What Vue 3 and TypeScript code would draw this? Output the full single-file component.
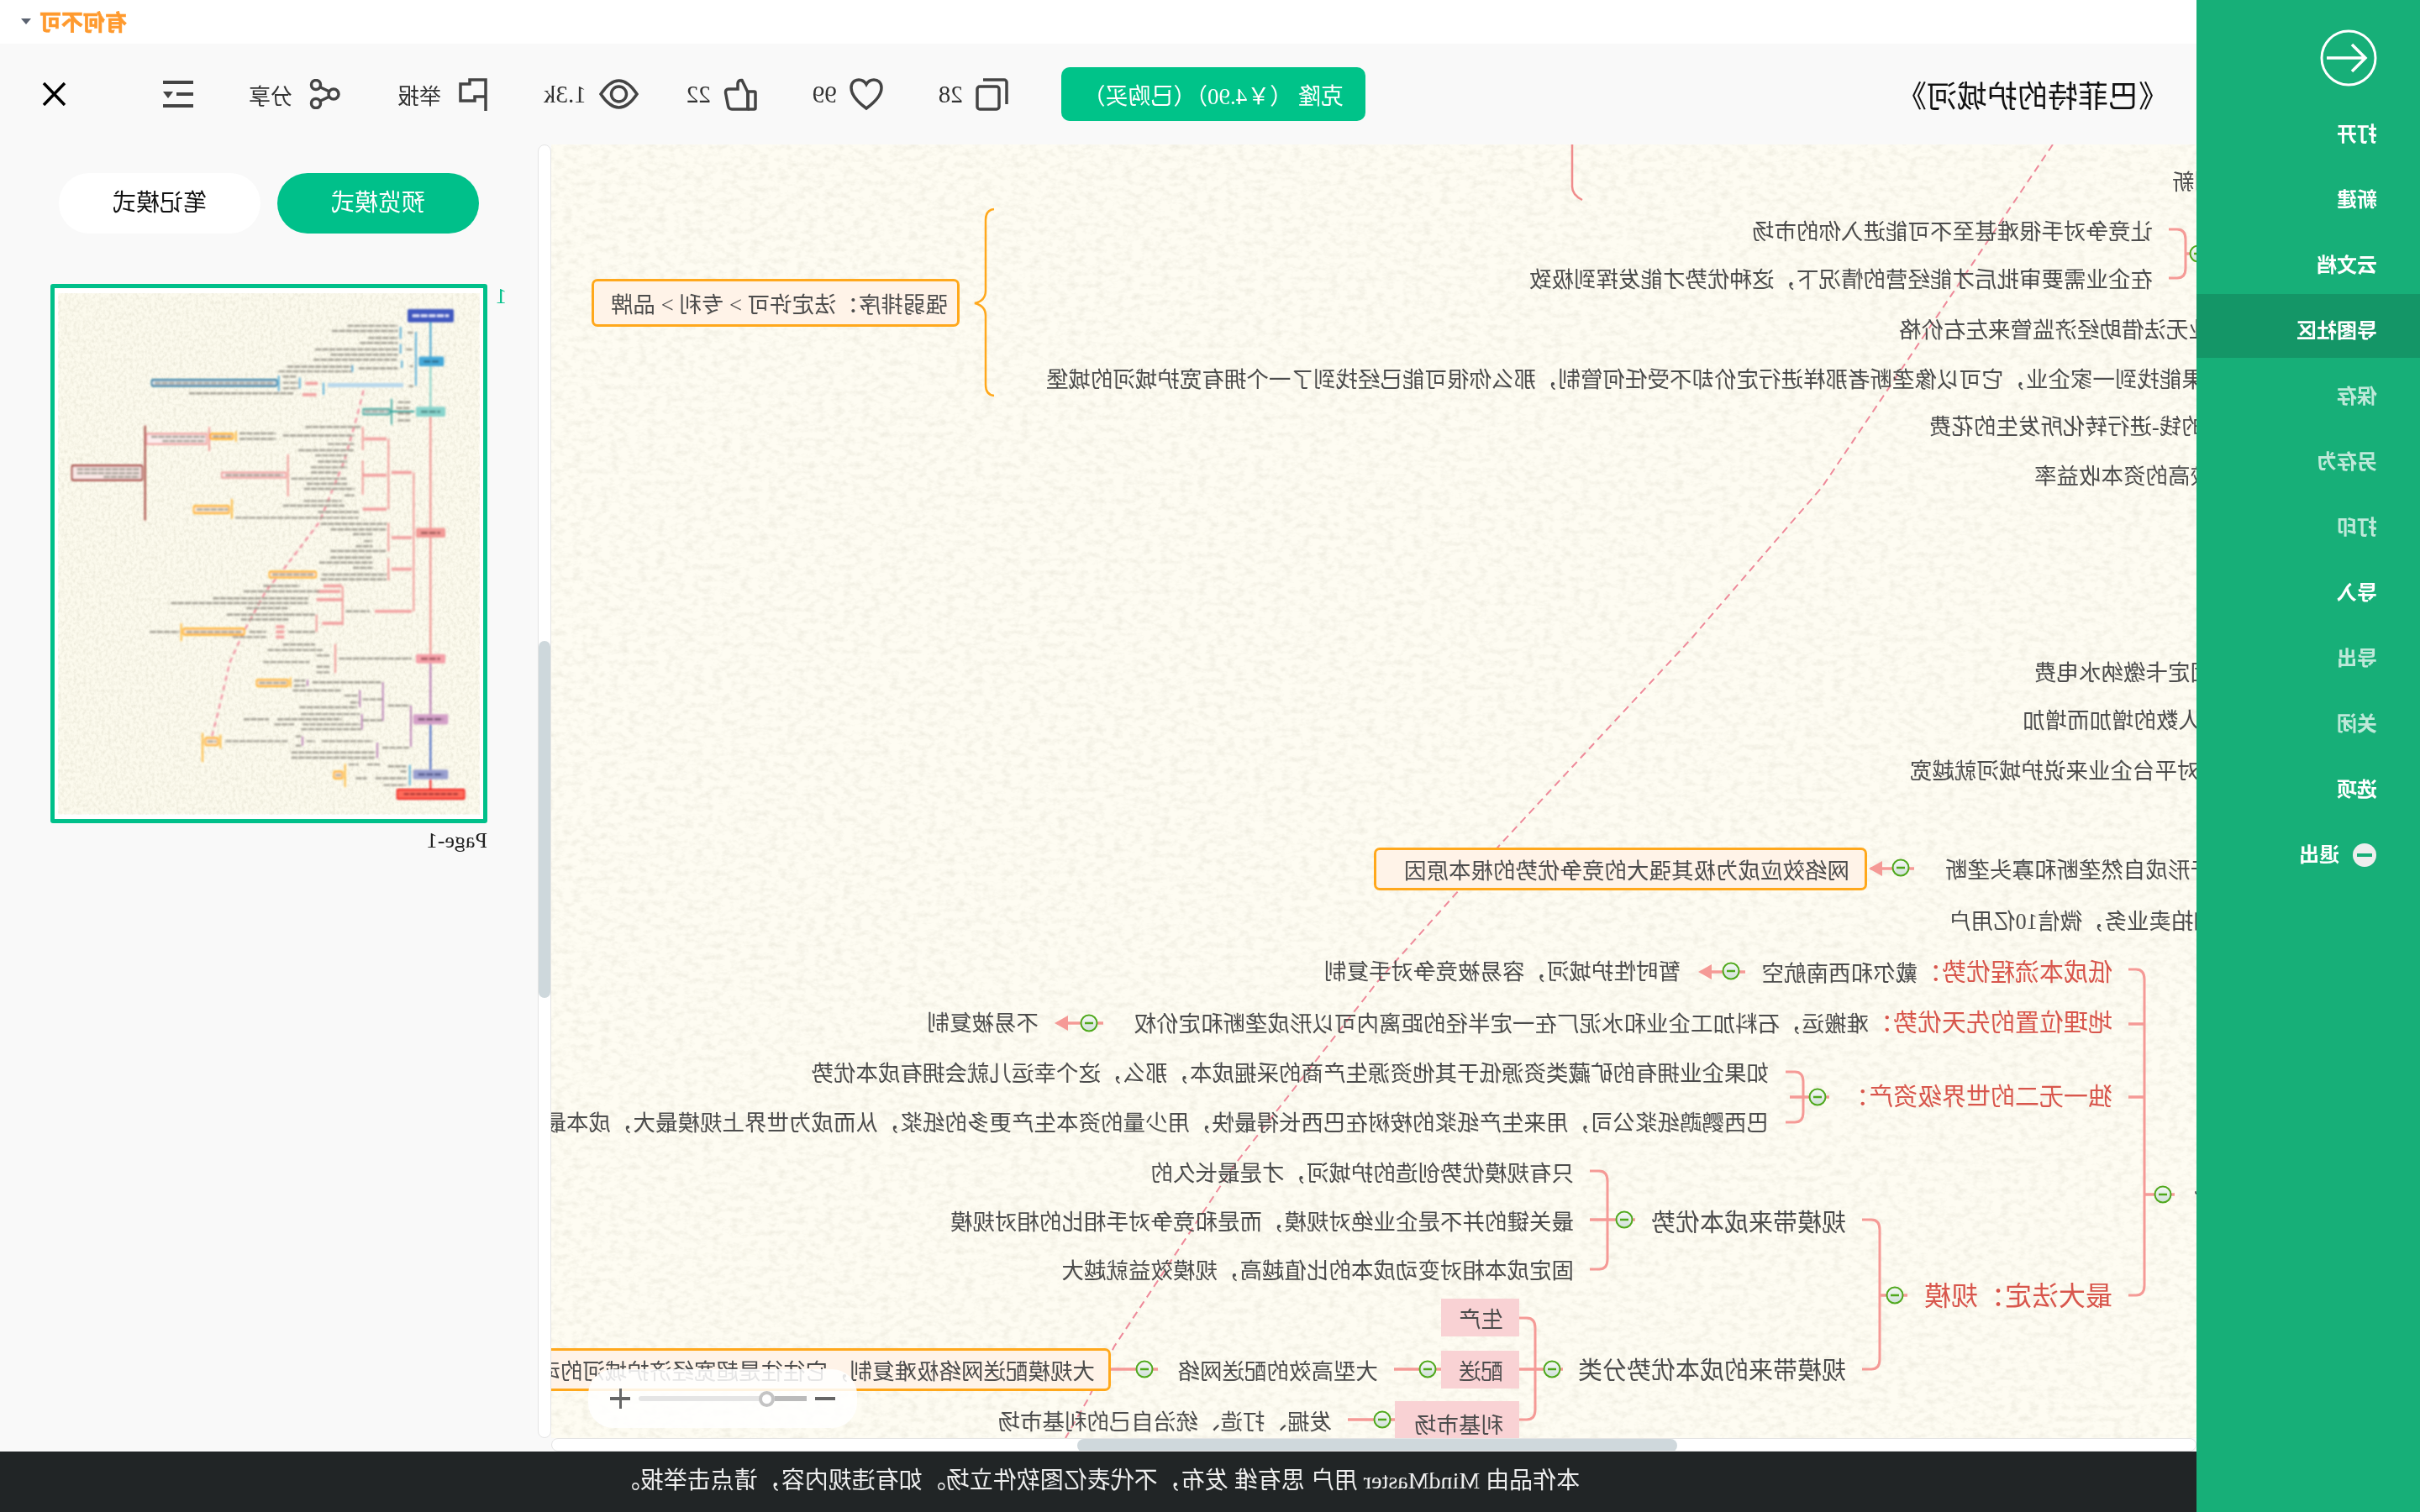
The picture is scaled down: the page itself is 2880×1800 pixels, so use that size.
<script setup lang="ts">
interface MapNode {
  text: string;
  y: number;
  right?: number; // reference x of the first character
  left?: number; // reference x of the last character, for text running under the sidebar
  lead?: string;
  big?: boolean;
  mid?: boolean;
}

interface MapBox {
  text: string;
  x1: number;
  x2: number;
  y1: number;
  y2: number;
  textRight: number;
  kind: 'orange' | 'pink';
}

type Bar = [number, number, number];
type Vert = [number, number, number];
type Rect = [number, number, number, number];

const menu = [
  { label: '打开' },
  { label: '新建' },
  { label: '云文档' },
  { label: '导图社区', active: true },
  { label: '保存', dim: true },
  { label: '另存为', dim: true },
  { label: '打印', dim: true },
  { label: '导入' },
  { label: '导出', dim: true },
  { label: '关闭', dim: true },
  { label: '选项' }
];

const nodes: MapNode[] = [
  { text: '创新', left: 2585, y: 217 },
  { text: '让竞争对手很难甚至不可能进入你的市场', right: 2562, y: 276 },
  { text: '在企业需要审批后才能经营的情况下，这种优势才能发挥到极致', right: 2562, y: 333 },
  { text: '企业无法借助经济监管来左右价格', left: 2260, y: 393 },
  { text: '如果能找到一家企业，它可以像垄断者那样进行定价却不受任何管制，那么你很可能已经找到了一个拥有宽护城河的城堡', left: 1245, y: 452 },
  { text: '投入的钱-进行转化所发生的花费', left: 2296, y: 508 },
  { text: '获得较高的资本收益率', left: 2421, y: 567 },
  { text: '按固定卡缴纳水电费', left: 2421, y: 801 },
  { text: '随着用户人数的增加而增加', left: 2407, y: 858 },
  { text: '对平台企业来说护城河就越宽', left: 2273, y: 918 },
  { text: '易于形成自然垄断和寡头垄断', left: 2315, y: 1036 },
  { text: '如拍卖业务，微信10亿用户', left: 2319, y: 1097 },
  { text: '戴尔和西南航空', lead: '低成本流程优势：', right: 2514, y: 1158 },
  { text: '暂时性护城河，容易被竞争对手复制', right: 2000, y: 1157 },
  { text: '难搬运，石料加工企业和水泥厂在一定半径的距离内可以形成垄断和定价权', lead: '地理位置的先天优势：', right: 2514, y: 1218 },
  { text: '不易被复制', right: 1236, y: 1218 },
  { text: '', lead: '独一无二的世界级资产：', right: 2514, y: 1306 },
  { text: '如果企业拥有的矿藏类资源低于其他资源生产商的采掘成本，那么，这个幸运儿就会拥有成本优势', right: 2105, y: 1278 },
  { text: '巴西鹦鹉纸浆公司，用来生产纸浆的桉树在巴西长得最快，用少量的资本生产更多的纸浆，从而成为世界上规模最大，成本最低的企业', right: 2105, y: 1337 },
  { text: '只有规模优势创造的护城河，才是最长久的', right: 1873, y: 1397 },
  { text: '最关键的并不是企业绝对规模，而是和竞争对手相比的相对规模', right: 1873, y: 1455 },
  { text: '固定成本相对变动成本的比值越高，规模效益就越大', right: 1873, y: 1513 },
  { text: '规模带来成本优势', right: 2197, y: 1456, mid: true },
  { text: '', lead: '最大法定：规模', right: 2514, y: 1543, big: true },
  { text: '规模带来的成本优势分类', right: 2197, y: 1632, mid: true },
  { text: '大型高效的配送网络', right: 1640, y: 1633 },
  { text: '发掘、打造、统治自己的利基市场', right: 1585, y: 1693 },
  { text: '成本优势', left: 2611, y: 1422 }
];

const boxes: MapBox[] = [
  { text: '强弱排序：法定许可 > 专利 > 品牌', x1: 704, x2: 1142, y1: 332, y2: 389, textRight: 1131, kind: 'orange' },
  { text: '网络效应成为极其强大的竞争优势的根本原因', x1: 1635, x2: 2222, y1: 1009, y2: 1060, textRight: 2204, kind: 'orange' },
  { text: '大规模配送网络极难复制，它往往是超宽经济护城河的动力来源', x1: 400, x2: 1322, y1: 1605, y2: 1656, textRight: 1306, kind: 'orange' },
  { text: '生产', x1: 1715, x2: 1808, y1: 1546, y2: 1591, textRight: 1789, kind: 'pink' },
  { text: '配送', x1: 1715, x2: 1808, y1: 1608, y2: 1653, textRight: 1789, kind: 'pink' },
  { text: '利基市场', x1: 1660, x2: 1808, y1: 1668, y2: 1720, textRight: 1789, kind: 'pink' }
];

const nodeStyle = (n: MapNode) => ({
  top: `${n.y - 172 - 20}px`,
  ...(n.left !== undefined ? { right: `${n.left - 656}px` } : { left: `${2614 - (n.right as number)}px` })
});

const boxStyle = (b: MapBox) => ({
  left: `${2614 - b.x2}px`,
  top: `${b.y1 - 172}px`,
  width: `${b.x2 - b.x1}px`,
  height: `${b.y2 - b.y1}px`,
  paddingLeft: `${b.x2 - b.textRight}px`
});

// 括号: 从 xa 起, 竖线在 xv
const bracket = (xa: number, xv: number, y1: number, y2: number) =>
  `M${xa} ${y1}H${xv - 10}Q${xv} ${y1} ${xv} ${y1 + 12}V${y2 - 12}Q${xv} ${y2} ${xv - 10} ${y2}H${xa}`;

const brackets = [
  bracket(2581, 2601, 273, 331),
  bracket(2533, 2552, 1154, 1542),
  bracket(2216, 2237, 1452, 1630),
  bracket(1892, 1913, 1394, 1511),
  bracket(1808, 1827, 1569, 1690),
  bracket(2125, 2146, 1276, 1336)
];

const stubs: Bar[] = [
  [2601, 2616, 302],
  [2533, 2552, 1219],
  [2533, 2552, 1306],
  [2552, 2588, 1422],
  [2237, 2270, 1542],
  [1892, 1946, 1452],
  [1808, 1860, 1630],
  [1659, 1715, 1630],
  [1604, 1660, 1690],
  [1322, 1378, 1630],
  [1258, 1313, 1218],
  [2024, 2077, 1157],
  [2226, 2278, 1034],
  [2130, 2177, 1306]
];

const arrows = [
  [2224, 1034],
  [2021, 1157],
  [1255, 1218]
];

const dots = [
  [2616, 302],
  [2574, 1422],
  [2255, 1542],
  [2262, 1033],
  [2060, 1156],
  [2163, 1306],
  [1933, 1452],
  [1847, 1630],
  [1699, 1630],
  [1645, 1690],
  [1362, 1630],
  [1296, 1218]
];

// 缩略图: 模糊的小导图, 坐标按参考图放大后的空间
const thumbGrey: Bar[] = [
  [1060, 1240, 117], [1005, 1240, 132], [1135, 1240, 152], [1105, 1240, 167], [945, 1240, 186], [1000, 1240, 201],
  [940, 1240, 216], [1100, 1240, 241], [845, 1075, 236], [815, 1075, 250], [1275, 1295, 137], [1270, 1295, 186],
  [1283, 1295, 235], [1280, 1295, 293], [830, 880, 265], [830, 885, 283], [830, 885, 299], [495, 870, 314],
  [1240, 1285, 340], [1235, 1285, 357], [1240, 1285, 373], [1240, 1285, 393],
  [910, 1110, 412], [830, 1085, 437], [990, 1085, 462], [885, 1085, 480], [945, 1060, 495], [955, 1060, 513],
  [930, 1060, 530], [930, 1030, 545], [860, 1060, 563], [915, 1060, 578], [905, 1085, 593], [1050, 1085, 612],
  [905, 1040, 628], [830, 1050, 642], [955, 1100, 660], [660, 1100, 677], [675, 805, 431], [675, 805, 447],
  [965, 1200, 695], [1000, 1200, 711], [1080, 1150, 725], [1120, 1150, 745], [1090, 1150, 760], [1000, 1200, 774],
  [1000, 1150, 793], [960, 1150, 808], [1080, 1150, 823], [970, 1200, 843], [965, 1200, 857],
  [760, 890, 876], [690, 960, 892], [580, 920, 912], [430, 920, 926], [700, 850, 941], [630, 850, 960],
  [680, 850, 974], [710, 770, 1010], [650, 770, 1025], [1055, 1140, 950], [850, 945, 1010], [850, 945, 960], [355, 460, 1010],
  [830, 945, 1047], [775, 975, 1063], [950, 1000, 1079], [760, 925, 1098], [950, 1000, 1112], [950, 1000, 1128], [1030, 1290, 1088],
  [870, 910, 1152], [870, 910, 1167], [935, 1180, 1157], [865, 1040, 1181], [1050, 1100, 1196], [1070, 1100, 1216],
  [890, 1095, 1230], [1115, 1185, 1207], [1115, 1185, 1268], [895, 1105, 1250], [690, 780, 1265], [810, 1040, 1265],
  [800, 870, 1280], [900, 1105, 1280], [895, 1110, 1294], [625, 850, 1329], [970, 1150, 1329], [915, 945, 1329],
  [875, 895, 1315], [875, 895, 1342], [860, 1160, 1362], [860, 1160, 1377], [1185, 1280, 1348], [1205, 1283, 1225],
  [1065, 1100, 1397], [1130, 1180, 1397], [1205, 1270, 1402], [1250, 1270, 1417], [1090, 1130, 1437], [1160, 1270, 1437], [1190, 1270, 1457],
  // 框里的字
  [95, 318, 536], [95, 318, 547], [190, 318, 558], [360, 552, 441], [400, 552, 453], [372, 800, 284], [625, 830, 553],
  [522, 634, 653], [580, 646, 440], [792, 940, 843], [485, 685, 1010], [745, 842, 1159], [560, 592, 1330], [1018, 1038, 1428], [1122, 1205, 367]
];

const thumbPinkBars: Bar[] = [
  [1120, 1200, 447], [1115, 1200, 553], [1115, 1200, 652], [1218, 1290, 545], [1218, 1290, 735], [1218, 1290, 827], [1158, 1290, 950],
  [975, 1040, 876], [950, 1035, 892], [950, 1040, 916], [970, 1040, 985], [910, 955, 285], [900, 950, 318], [805, 835, 995], [805, 835, 1010], [805, 835, 1025]
];

const thumbPinkVerts: Vert[] = [
  [1297, 545, 950], [1207, 447, 652], [1207, 692, 775], [1207, 795, 860], [1115, 412, 480], [1115, 510, 610],
  [1043, 877, 990], [950, 960, 1010], [1017, 1045, 1130], [848, 492, 615], [567, 412, 483]
];

const thumbBlueVerts: Vert[] = [[1305, 135, 292], [1250, 120, 155], [1250, 170, 198], [1255, 218, 240], [1078, 232, 252], [975, 283, 318], [815, 262, 308], [890, 268, 300], [1283, 1398, 1458]];
const thumbPurpleVerts: Vert[] = [[1187, 1157, 1270], [1287, 1225, 1345], [1167, 1333, 1378], [1105, 1180, 1230], [1112, 1250, 1295], [918, 1150, 1168], [900, 1315, 1342]];
const thumbOrangeVerts: Vert[] = [[648, 622, 680], [662, 425, 455], [467, 985, 1037], [857, 1143, 1172], [607, 1310, 1350], [543, 1305, 1390], [1052, 1395, 1463]];
const thumbOrangeBoxes: Rect[] = [[512, 643, 126, 20], [572, 432, 80, 15], [782, 835, 166, 16], [475, 1001, 217, 17], [737, 1150, 111, 18], [553, 1320, 45, 20], [1012, 1418, 31, 19]];
const thumbTitleNodes = [
  { x: 1275, y: 68, w: 165, h: 39, fill: '#4059c0', ink: '#e8ecff' },
  { x: 1315, y: 207, w: 90, h: 28, fill: '#45a8d8', ink: '#2f6f90' },
  { x: 1305, y: 353, w: 105, h: 29, fill: '#88d4cc', ink: '#4d8a86' },
  { x: 1305, y: 707, w: 105, h: 28, fill: '#f29a96', ink: '#a05a58' },
  { x: 1305, y: 1075, w: 105, h: 27, fill: '#f5a0a8', ink: '#a85a62' },
  { x: 1295, y: 1250, w: 125, h: 30, fill: '#d4a0c8', ink: '#7d5a78' },
  { x: 1295, y: 1412, w: 125, h: 28, fill: '#9aa0d0', ink: '#565c90' }
];
const thumbSpine = [
  { y1: 100, y2: 220, c: '#3aa0d0' },
  { y1: 220, y2: 370, c: '#80d0c8' },
  { y1: 370, y2: 1090, c: '#f08a8a' },
  { y1: 1090, y2: 1265, c: '#b070b0' },
  { y1: 1265, y2: 1425, c: '#3b5cc0' },
  { y1: 1425, y2: 1480, c: '#f01818' }
];
</script>

<template>
  <div class="page" lang="zh-CN">
    <aside class="sidebar">
      <svg class="back" viewBox="0 0 68 68" fill="none" stroke="#fff" stroke-width="3">
        <circle cx="34" cy="34" r="32" />
        <path d="M60 34H16M30 18 14 34l16 16" stroke-width="3.5" />
      </svg>
      <div v-for="m in menu" :key="m.label" class="menu-item" :class="{ active: m.active, dim: m.dim }">{{ m.label }}</div>
      <div class="menu-item exit">
        <span class="exit-dot"><i></i></span>
        退出
      </div>
    </aside>

    <div class="main">
      <header class="topbar">
        <span class="brand">有何不可</span>
        <i class="caret"></i>
      </header>

      <div class="toolbar">
        <div class="title">《巴菲特的护城河》</div>
        <button class="clone">克隆 （￥4.90）（已购买）</button>
        <div class="tool">
          <svg width="39" height="40" viewBox="0 0 39 40" fill="none" stroke="#444" stroke-width="3.5">
            <rect x="11" y="11" width="26" height="27" rx="3" />
            <path d="M30 3H5a3 3 0 0 0-3 3v26" />
          </svg>
          28
        </div>
        <div class="tool t-heart">
          <svg width="40" height="40" viewBox="0 0 40 40" fill="none" stroke="#444" stroke-width="3.5">
            <path d="M20 37C9 29 2 21 2 12.5 2 6 6.500 3 11 3c4 0 7 2 9 5.500C22 5 25 3 29 3c4.500 0 9 3 9 9.500C38 21 31 29 20 37Z" />
          </svg>
          99
        </div>
        <div class="tool t-thumb">
          <svg width="40" height="40" viewBox="0 0 40 40" fill="none" stroke="#444" stroke-width="3.500">
            <path d="M11 18 18 3.500c3-.5 5 1.500 5 4V14h11c2.500 0 4 2 3.500 4.500L34.500 34c-.5 2.500-2 4-4.500 4H11Z" />
            <rect x="2" y="17" width="9" height="21" rx="1.500" />
          </svg>
          22
        </div>
        <div class="tool t-eye">
          <svg width="47" height="36" viewBox="0 0 47 36" fill="none" stroke="#444" stroke-width="3.500">
            <path d="M2 18C10 6 17 2 23.500 2S37 6 45 18C37 30 30 34 23.500 34S10 30 2 18Z" />
            <circle cx="23.500" cy="18" r="9" />
          </svg>
          1.3k
        </div>
        <div class="tool t-flag">
          <svg width="35" height="40" viewBox="0 0 35 40" fill="none" stroke="#444" stroke-width="3.500">
            <path d="M3 40V3H22V8H33V28H16V23H3" />
          </svg>
          举报
        </div>
        <div class="tool t-share">
          <svg width="37" height="36" viewBox="0 0 37 36" fill="none" stroke="#444" stroke-width="3.500">
            <circle cx="29" cy="7" r="5.500" />
            <circle cx="29" cy="29" r="5.500" />
            <circle cx="8" cy="18" r="6" />
            <path d="M13 15 24.500 9.500M13 21l11.500 5.500" />
          </svg>
          分享
        </div>
        <svg class="lines" width="36" height="32" viewBox="0 0 36 32" fill="#444">
          <rect width="36" height="4" />
          <rect y="14" width="20" height="4" />
          <path d="M24 13H36L30 21Z" />
          <rect y="28" width="36" height="4" />
        </svg>
        <svg class="close" width="29" height="28" viewBox="0 0 29 28" stroke="#000" stroke-width="3.500">
          <path d="M2 1 27 27M27 1 2 27" />
        </svg>
      </div>

      <div class="body">
        <div class="stage">
          <div class="canvas-row">
            <div class="canvas">
              <svg class="map" width="1958" height="1540" viewBox="0 0 1958 1540">
                <defs>
                  <filter id="paper" x="0" y="0" width="100%" height="100%">
                    <feTurbulence type="fractalNoise" baseFrequency="0.09 0.14" numOctaves="4" seed="7" />
                    <feColorMatrix values="0 0 0 0 0.78  0 0 0 0 0.76  0 0 0 0 0.66  0 0 0 1.1 -0.47" />
                  </filter>
                  <linearGradient id="dot" x1="0" y1="0" x2="0" y2="1">
                    <stop offset="0" stop-color="#f6f9f6" />
                    <stop offset="1" stop-color="#cfe0d8" />
                  </linearGradient>
                </defs>
                <rect width="1958" height="1540" fill="#fefcf2" />
                <rect width="1958" height="1540" filter="url(#paper)" />
                <!-- 连线都按参考图坐标写, 这里统一翻转 -->
                <g transform="translate(2614,-172) scale(-1,1)" fill="none">
                  <polyline points="2443,172 2169,579 2013,760 1783,1008 1736,1060 1640,1168 1469,1387 1326,1603 1294,1667 1268,1712"
                    stroke="#ee8a9a" stroke-width="2" stroke-dasharray="9 6" />
                  <path d="M1871 172V222Q1871 232 1883 238" stroke="#f08c8c" stroke-width="2.500" />
                  <path d="M1183 249Q1173 250 1173 262V346Q1173 358 1160 361Q1173 364 1173 376V458Q1173 470 1183 471"
                    stroke="#ffa81c" stroke-width="2.500" />
                  <path v-for="(d, i) in brackets" :key="i" :d="d" stroke="#f59a96" stroke-width="3" />
                  <line v-for="(s, i) in stubs" :key="'s' + i" :x1="s[0]" :x2="s[1]" :y1="s[2]" :y2="s[2]" stroke="#f59a96" stroke-width="3.500" />
                  <path v-for="(a, i) in arrows" :key="'a' + i" :d="`M${a[0]} ${a[1]}l16 -9v18Z`" fill="#f59a96" />
                  <g v-for="(d, i) in dots" :key="'d' + i" :transform="`translate(${d[0]},${d[1]})`">
                    <circle r="9.500" fill="url(#dot)" stroke="#4fa81c" stroke-width="2" />
                    <rect x="-5" y="-1.250" width="10" height="2.500" fill="#4fa81c" />
                  </g>
                </g>
              </svg>

              <div v-for="b in boxes" :key="b.text" class="map-box" :class="b.kind" :style="boxStyle(b)">{{ b.text }}</div>
              <div v-for="n in nodes" :key="n.y + (n.lead || n.text)" class="map-node" :class="{ big: n.big, mid: n.mid }" :style="nodeStyle(n)">
                <span v-if="n.lead" class="lead">{{ n.lead }}</span>{{ n.text }}
              </div>

              <div class="zoom-ctl">
                <svg width="24" height="24" viewBox="0 0 24 24" fill="#666"><rect y="10" width="24" height="4" /></svg>
                <div class="slider">
                  <div class="slider-fill"></div>
                  <div class="knob"></div>
                </div>
                <svg width="24" height="24" viewBox="0 0 24 24" fill="#666"><rect y="10" width="24" height="4" /><rect x="10" width="3" height="24" /></svg>
              </div>
            </div>
            <div class="vscroll"><div class="vthumb"></div></div>
          </div>
          <div class="hscroll"><div class="hthumb"></div></div>
        </div>

        <div class="panel">
          <div class="tabs">
            <div class="tab on">预览模式</div>
            <div class="tab">笔记模式</div>
          </div>
          <div class="pages">
            <div class="page-no">1</div>
            <div>
              <div class="thumb">
                <svg width="510" height="632" viewBox="15 7 1530 1549" preserveAspectRatio="none">
                  <defs>
                    <filter id="paperThumb" x="0" y="0" width="100%" height="100%">
                      <feTurbulence type="fractalNoise" baseFrequency="0.09" numOctaves="3" seed="4" />
                      <feColorMatrix values="0 0 0 0 0.76  0 0 0 0 0.74  0 0 0 0 0.62  0 0 0 1.2 -0.46" />
                    </filter>
                    <filter id="soft" filterUnits="userSpaceOnUse" x="0" y="0" width="1568" height="1568">
                      <feGaussianBlur stdDeviation="3 2.500" />
                    </filter>
                  </defs>
                  <rect x="0" y="0" width="1568" height="1568" fill="#fff" />
                  <rect x="28" y="22" width="1504" height="1520" fill="#fcfaed" />
                  <rect x="28" y="22" width="1504" height="1520" filter="url(#paperThumb)" />
                  <g filter="url(#soft)">
                    <g transform="translate(1560,0) scale(-1,1)" fill="none">
                      <line v-for="(s, i) in thumbSpine" :key="'sp' + i" x1="1357" x2="1357" :y1="s.y1" :y2="s.y2" :stroke="s.c" stroke-width="6" />
                      <polyline points="1118,305 1095,380 1050,510 960,690 830,830 770,890 690,1010 640,1100 600,1240 575,1320" stroke="#ee6f88" stroke-width="5" stroke-dasharray="16 12" />
                      <line v-for="(v, i) in thumbPinkVerts" :key="'pv' + i" :x1="v[0]" :x2="v[0]" :y1="v[1]" :y2="v[2]" stroke="#f08a8a" stroke-width="5" />
                      <line v-for="(v, i) in thumbBlueVerts" :key="'bv' + i" :x1="v[0]" :x2="v[0]" :y1="v[1]" :y2="v[2]" stroke="#3ea3d6" stroke-width="5" />
                      <line v-for="(v, i) in thumbPurpleVerts" :key="'uv' + i" :x1="v[0]" :x2="v[0]" :y1="v[1]" :y2="v[2]" stroke="#b070b0" stroke-width="5" />
                      <line v-for="(v, i) in thumbOrangeVerts" :key="'ov' + i" :x1="v[0]" :x2="v[0]" :y1="v[1]" :y2="v[2]" stroke="#ffb020" stroke-width="5" />
                      <line v-for="(b, i) in thumbPinkBars" :key="'pb' + i" :x1="b[0]" :x2="b[1]" :y1="b[2]" :y2="b[2]" stroke="#f2a0a0" stroke-width="9" />
                      <line x1="990" x2="1260" y1="290" y2="290" stroke="#b8d8ec" stroke-width="12" />
                      <rect v-for="(r, i) in thumbOrangeBoxes" :key="'ob' + i" :x="r[0]" :y="r[1]" :width="r[2]" :height="r[3]" rx="3" stroke="#ffb020" stroke-width="6" fill="#fff3e0" />
                      <rect x="362" y="275" width="446" height="17" rx="3" stroke="#2f7fa5" stroke-width="6" fill="#e8f2f6" />
                      <rect x="1117" y="360" width="93" height="15" stroke="#2aa198" stroke-width="5" fill="#e8f6f4" />
                      <line x1="1210" x2="1300" y1="367" y2="367" stroke="#2aa198" stroke-width="5" />
                      <line x1="1218" x2="1218" y1="330" y2="405" stroke="#2aa198" stroke-width="5" />
                      <rect x="612" y="545" width="228" height="15" stroke="#f09a9a" stroke-width="5" fill="#fdeeee" />
                      <rect x="343" y="432" width="215" height="30" stroke="#f09a9a" stroke-width="5" fill="#fdeeee" />
                      <rect x="77" y="525" width="251" height="42" rx="4" stroke="#a84a45" stroke-width="6" fill="#f9e8e6" />
                      <line x1="338" x2="338" y1="408" y2="685" stroke="#a03a35" stroke-width="6" />
                      <line v-for="(b, i) in thumbGrey" :key="'g' + i" :x1="b[0]" :x2="b[1]" :y1="b[2]" :y2="b[2]" stroke="#a09d92" stroke-width="6" stroke-dasharray="22 3" />
                      <rect v-for="n in thumbTitleNodes" :key="n.y" :x="n.x" :y="n.y" :width="n.w" :height="n.h" rx="5" :fill="n.fill" />
                      <line v-for="n in thumbTitleNodes" :key="'i' + n.y" :x1="n.x + 18" :x2="n.x + n.w - 18" :y1="n.y + n.h / 2" :y2="n.y + n.h / 2" :stroke="n.ink" stroke-width="7" stroke-dasharray="24 5" />
                      <rect x="1238" y="1470" width="240" height="27" rx="3" fill="#ff6a5a" stroke="#f01010" stroke-width="5" />
                      <line x1="1262" x2="1455" y1="1483" y2="1483" stroke="#a83030" stroke-width="6" stroke-dasharray="18 4" />
                    </g>
                  </g>
                </svg>
              </div>
              <div class="page-name">Page-1</div>
            </div>
          </div>
        </div>
      </div>

      <footer class="footer">本作品由 MindMaster 用户 思有维 发布，不代表亿图软件立场。如有违规内容，请点击举报。</footer>
    </div>
  </div>
</template>

<style scoped>
.page {
  display: flex;
  width: 2880px;
  height: 1800px;
  overflow: hidden;
  transform: scaleX(-1);
  background: #f9f9f9;
  font-family: "Liberation Serif", "Noto Sans CJK SC", serif;
  color: #222;
}

.sidebar {
  width: 266px;
  flex: none;
  background: #17af78;
  color: #fff;
  padding-top: 35px;
  box-sizing: border-box;
}

.back {
  display: block;
  width: 68px;
  height: 68px;
  margin: 0 0 13px 51px;
}

.menu-item {
  height: 76px;
  margin-bottom: 2px;
  padding: 12px 0 0 51px;
  box-sizing: border-box;
  font-size: 24px;
  line-height: 64px;
  font-weight: 700;
}

.menu-item.active {
  background: #149667;
}

.menu-item.dim {
  color: rgba(255, 255, 255, 0.72);
}

.menu-item.exit {
  display: flex;
  align-items: center;
  gap: 16px;
  padding-left: 52px;
}

.exit-dot {
  display: flex;
  align-items: center;
  justify-content: center;
  width: 28px;
  height: 28px;
  border-radius: 50%;
  background: #eee;
}

.exit-dot i {
  width: 18px;
  height: 4px;
  background: #17af78;
}

.main {
  flex: 1;
  min-width: 0;
  display: flex;
  flex-direction: column;
}

.topbar {
  height: 52px;
  flex: none;
  background: #fff;
  display: flex;
  align-items: center;
  justify-content: flex-end;
  padding-right: 25px;
  gap: 10px;
}

.brand {
  padding-top: 3px;
  font-size: 26px;
  font-weight: 700;
  line-height: 49px;
  color: #ff9a2e;
  -webkit-text-stroke: 0.6px #ff9a2e;
}

.caret {
  width: 0;
  height: 0;
  border-left: 6px solid transparent;
  border-right: 6px solid transparent;
  border-top: 7px solid #5a6270;
  margin-top: -2px;
}

.toolbar {
  height: 120px;
  flex: none;
  display: flex;
  align-items: center;
  gap: 66px;
  padding: 0 50px;
  box-sizing: border-box;
}

.title {
  flex: 1;
  margin-left: -17px;
  font-size: 36px;
  color: #111;
}

.clone {
  width: 362px;
  height: 64px;
  margin-right: -3px;
  border: 0;
  border-radius: 10px;
  background: #00c389;
  color: #fff;
  font: inherit;
  font-size: 27px;
  padding: 0;
}

.tool {
  display: flex;
  align-items: center;
  gap: 15px;
  font-size: 29px;
  color: #333;
}

.t-eye {
  margin-left: -9px;
}

.t-flag {
  gap: 21px;
  font-size: 26px;
}

.t-share {
  gap: 20px;
  margin-left: 2px;
  font-size: 26px;
}

.close {
  margin-left: 49px;
}

.body {
  flex: 1;
  min-height: 0;
  display: flex;
}

.stage {
  flex: 1;
  min-width: 0;
  display: flex;
  flex-direction: column;
}

.canvas-row {
  display: flex;
  height: 1540px;
}

.canvas {
  position: relative;
  width: 1958px;
  height: 1540px;
  overflow: hidden;
  flex: none;
  background: #fefcf2;
}

.map {
  display: block;
}

.map-node {
  position: absolute;
  white-space: nowrap;
  font-size: 26.5px;
  line-height: 40px;
  color: #4c4c4c;
}

.map-node.mid {
  font-size: 29px;
}

.map-node.big .lead {
  font-size: 32px;
}

.lead {
  font-size: 29px;
  color: #d8564c;
}

.map-box {
  position: absolute;
  box-sizing: border-box;
  display: flex;
  align-items: center;
  white-space: nowrap;
  overflow: hidden;
  font-size: 26.5px;
  color: #4c4c4c;
}

.map-box.orange {
  border: 3px solid #ffa81c;
  border-radius: 7px;
  background: #fff3e8;
}

.map-box.pink {
  background: #f9d2d4;
}

.zoom-ctl {
  position: absolute;
  right: 44px;
  bottom: 12px;
  width: 320px;
  height: 70px;
  border-radius: 30px;
  background: rgba(255, 255, 255, 0.86);
  display: flex;
  align-items: center;
  gap: 10px;
  padding-left: 26px;
  box-sizing: border-box;
}

.slider {
  width: 200px;
  height: 6px;
  background: #e5e5e5;
  display: flex;
  align-items: center;
  border-radius: 3px;
}

.slider-fill {
  width: 38px;
  height: 6px;
  background: #bbb;
}

.knob {
  width: 19px;
  height: 19px;
  flex: none;
  box-sizing: border-box;
  border: 4px solid #c4c4c4;
  border-radius: 50%;
  background: #fff;
}

.vscroll {
  width: 16px;
  flex: none;
  box-sizing: border-box;
  background: #fff;
  border: 1px solid #e4e4e4;
  border-radius: 8px;
  overflow: hidden;
}

.vthumb {
  height: 425px;
  margin-top: 590px;
  background: #ced8dc;
  border-radius: 8px;
}

.hscroll {
  width: 1958px;
  height: 16px;
  flex: none;
  box-sizing: border-box;
  background: #fff;
  border: 1px solid #e4e4e4;
  border-radius: 8px;
  overflow: hidden;
}

.hthumb {
  width: 714px;
  height: 16px;
  margin-left: 617px;
  background: #cfd8dc;
  border-radius: 8px;
}

.panel {
  width: 640px;
  flex: none;
}

.tabs {
  display: flex;
  gap: 20px;
  margin: 34px 0 60px 70px;
}

.tab {
  width: 240px;
  height: 72px;
  border-radius: 36px;
  background: #fff;
  color: #111;
  font-size: 28px;
  line-height: 72px;
  text-align: center;
}

.tab.on {
  background: #00c08a;
  color: #fff;
}

.pages {
  display: flex;
}

.page-no {
  width: 60px;
  padding-right: 10px;
  box-sizing: border-box;
  text-align: right;
  font-size: 26px;
  line-height: 30px;
  color: #00c08a;
}

.thumb {
  width: 520px;
  height: 642px;
  box-sizing: border-box;
  border: 5px solid #00c08a;
  border-radius: 3px;
  overflow: hidden;
}

.thumb svg {
  display: block;
}

.page-name {
  font-size: 26px;
  line-height: 42px;
  color: #222;
}

.footer {
  height: 72px;
  flex: none;
  background: #212526;
  color: #eee;
  font-size: 28px;
  line-height: 70px;
  text-align: center;
  white-space: nowrap;
}
</style>
